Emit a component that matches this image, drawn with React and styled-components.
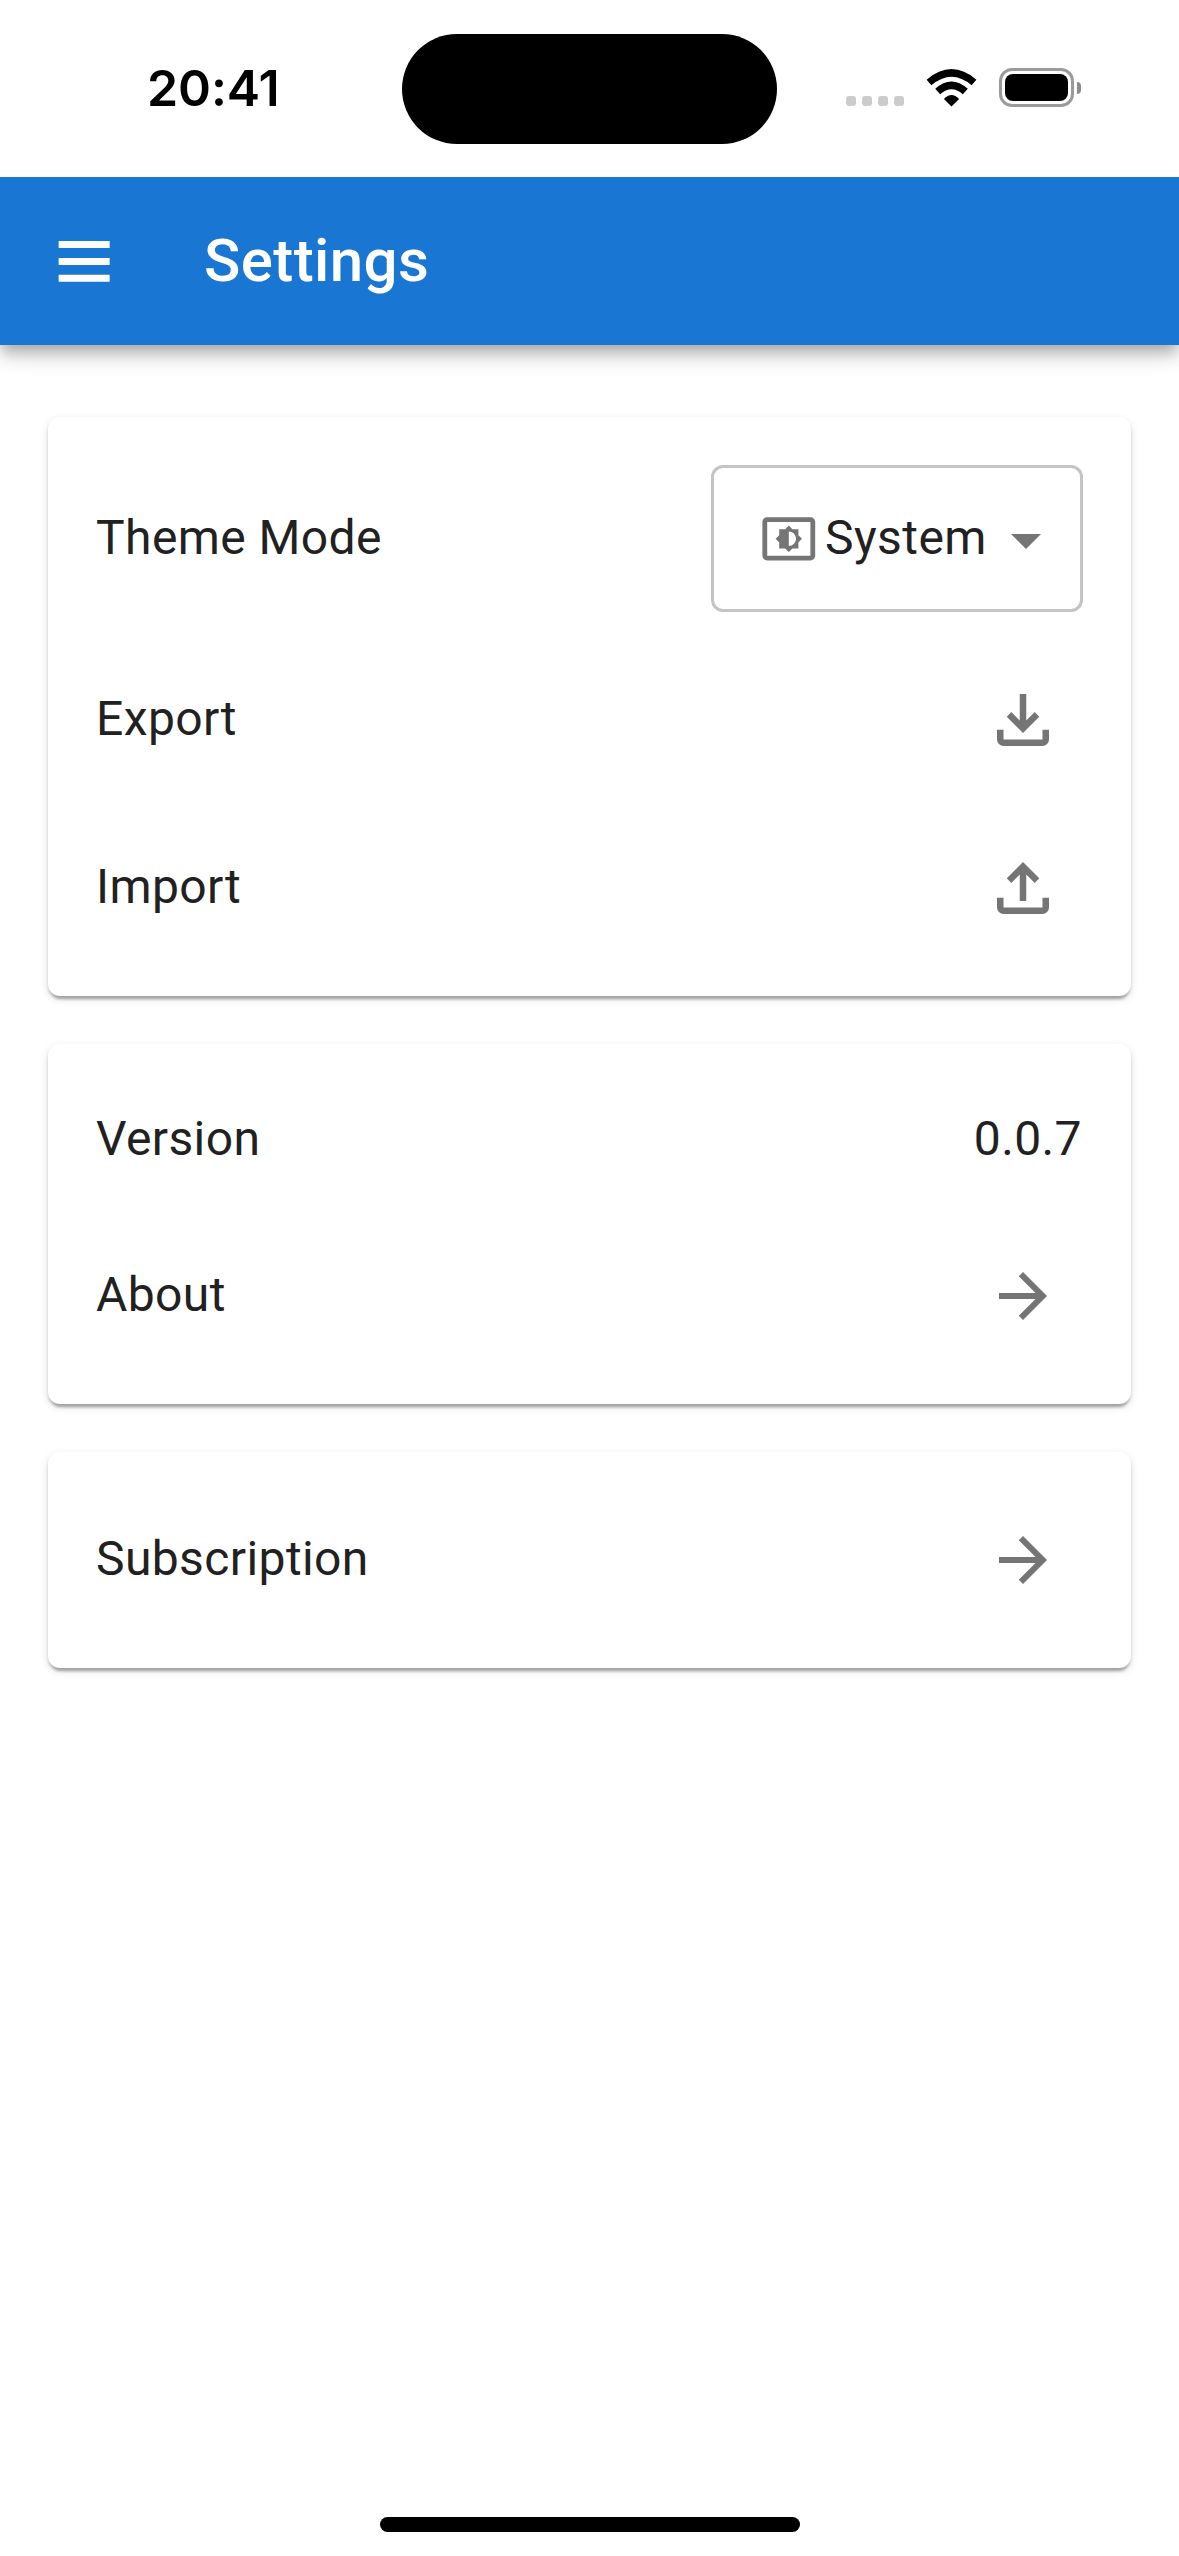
import React from "react";
import styled, { createGlobalStyle } from "styled-components";

const Global = createGlobalStyle`
  * { box-sizing: border-box; }
  body { margin: 0; background: #fff; }
`;

const Screen = styled.div`
  width: 1179px;
  height: 2556px;
  display: flex;
  flex-direction: column;
  background: #fff;
  color: #212121;
  font-family: Roboto, "Liberation Sans", sans-serif;
  font-size: 48px;
  line-height: 72px;
  letter-spacing: 0.4px;
`;

const StatusBar = styled.header`
  flex: none;
  position: relative;
  z-index: 1;
  height: 177px;
  display: grid;
  grid-template-columns: 402px 375px 402px;
  align-items: center;
  background: #fff;
`;

const Clock = styled.time`
  padding: 0 0 2px 147px;
  font: 600 50px/60px Inter, sans-serif;
  letter-spacing: -0.1px;
  color: #000;
`;

const Island = styled.div`
  height: 110px;
  margin-top: 1px;
  border-radius: 55px;
  background: #000;
`;

const StatusIcons = styled.div`
  display: flex;
  align-items: center;
  padding: 0 0 2px 69px;
`;

const SignalDots = styled.div`
  display: flex;
  gap: 6px;
  padding-top: 27px;
  margin-right: 22px;
`;

const SignalDot = styled.i`
  width: 10px;
  height: 10px;
  border-radius: 3px;
  background: #ccc;
`;

const Battery = styled.div`
  width: 75px;
  height: 39px;
  margin-left: 22px;
  padding: 3px;
  border: 3px solid #9b9b9b;
  border-radius: 13px;
`;

const BatteryLevel = styled.div`
  height: 100%;
  border-radius: 8px;
  background: #000;
`;

const BatteryCap = styled.div`
  width: 4px;
  height: 12px;
  margin-left: 3px;
  border-radius: 0 6px 6px 0;
  background: #8c8c8c;
`;

const AppBar = styled.nav`
  flex: none;
  height: 168px;
  display: flex;
  align-items: center;
  padding-left: 48px;
  background: #1976d2;
  color: #fff;
  box-shadow: 0 6px 12px -3px rgba(0, 0, 0, 0.2), 0 12px 15px 0 rgba(0, 0, 0, 0.14),
    0 3px 30px 0 rgba(0, 0, 0, 0.12);
`;

const MenuButton = styled.button`
  display: flex;
  padding: 0;
  border: 0;
  background: none;
  color: inherit;
  width: 156px;
`;

const Title = styled.h1`
  margin: 0;
  font-size: 60px;
  font-weight: 500;
  line-height: 96px;
  letter-spacing: 0.4px;
`;

const Content = styled.main`
  flex: 1;
  display: flex;
  flex-direction: column;
  gap: 48px;
  padding: 72px 48px 0;
`;

const Card = styled.section`
  display: flex;
  flex-direction: column;
  gap: 48px;
  padding: 48px;
  border-radius: 12px;
  background: #fff;
  box-shadow: 0 6px 3px -3px rgba(0, 0, 0, 0.2), 0 3px 3px 0 rgba(0, 0, 0, 0.14),
    0 3px 9px 0 rgba(0, 0, 0, 0.12);
`;

const Row = styled.div`
  height: ${(p) => p.$height}px;
  display: flex;
  align-items: center;
  justify-content: space-between;
`;

const Label = styled.span`
  padding-bottom: ${(p) => p.$lift ?? 3}px;
`;

const Value = styled(Label)`
  padding-right: 1px;
`;

const Select = styled.button`
  width: 372px;
  height: 147px;
  display: flex;
  align-items: center;
  padding: 0 18px 0 46px;
  border: 3px solid #c4c4c4;
  border-radius: 12px;
  background: none;
  color: inherit;
  font: inherit;
  letter-spacing: inherit;
`;

const SelectValue = styled(Label)`
  flex: 1;
  padding-left: 7.5px;
  text-align: left;
`;

const Caret = styled.span`
  display: flex;
  padding-top: 3px;
`;

const IconButton = styled.button`
  display: flex;
  padding: 0 ${(p) => p.$inset}px 0 0;
  border: 0;
  background: none;
  color: #757575;
`;

const HomeArea = styled.footer`
  display: flex;
  justify-content: center;
  padding-bottom: 24px;
`;

const HomeBar = styled.div`
  width: 420px;
  height: 15px;
  border-radius: 8px;
  background: #000;
`;

const Icon = ({ size = 72, color = "currentColor", d }) => (
  <svg width={size} height={size} viewBox="0 0 24 24" fill={color} aria-hidden="true">
    <path d={d} />
  </svg>
);

const MENU = "M3.55 5.35h17v2.300h-17zM3.55 11h17v2.300h-17zM3.55 16.620h17v2.300h-17z";
const TRAY = "M6 20q-.825 0-1.412-.587Q4 18.825 4 18v-3h2v3h12v-3h2v3q0 .825-.587 1.413Q18.825 20 18 20Z";
const DOWNLOAD = "m12 16-5-5 1.4-1.45 2.6 2.6V4h2v8.15l2.6-2.6L17 11Z" + TRAY;
const UPLOAD = "M11 16V7.85l-2.6 2.6L7 9l5-5 5 5-1.4 1.45-2.6-2.6V16Z" + TRAY;
const ARROW = "M12 4l-1.41 1.41L16.17 11H4v2h12.17l-5.58 5.59L12 20l8-8z";
const CARET = "M7 10l5 5 5-5z";
const DISPLAY =
  "M21 3H3c-1.11 0-2 .89-2 2v14c0 1.1.89 2 2 2h18c1.11 0 2-.9 2-2V5c0-1.11-.89-2-2-2zm0 16.02H3V4.98h18v14.04zM8 16h2.5l1.5 1.5 1.5-1.5H16v-2.5l1.5-1.5-1.5-1.5V8h-2.5L12 6.5 10.5 8H8v2.5L6.5 12 8 13.5V16zm4-7c1.66 0 3 1.34 3 3s-1.34 3-3 3V9z";

const Wifi = () => (
  <svg width="51" height="38" viewBox="0 0 51 38" aria-hidden="true">
    <path d="M25.500 37.600L17.900 30Q25.500 22.200 33.100 30Z" />
    <g fill="none" stroke="#000" strokeWidth="7.400">
      <path d="M11.700 22.600Q25.500 10.200 39.300 22.600" />
      <path d="M3 13.500Q25.500 -5.600 48 13.500" />
    </g>
  </svg>
);

export default function App() {
  return (
    <Screen>
      <Global />
      <StatusBar>
        <Clock>20:41</Clock>
        <Island />
        <StatusIcons>
          <SignalDots>
            <SignalDot /><SignalDot /><SignalDot /><SignalDot />
          </SignalDots>
          <Wifi />
          <Battery><BatteryLevel /></Battery>
          <BatteryCap />
        </StatusIcons>
      </StatusBar>
      <AppBar>
        <MenuButton aria-label="Menu"><Icon d={MENU} /></MenuButton>
        <Title>Settings</Title>
      </AppBar>
      <Content>
        <Card>
          <Row $height={147}>
            <Label $lift={1}>Theme Mode</Label>
            <Select>
              <Icon size={57.6} color="#757575" d={DISPLAY} />
              <SelectValue $lift={1}>System</SelectValue>
              <Caret><Icon color="#757575" d={CARET} /></Caret>
            </Select>
          </Row>
          <Row $height={120}>
            <Label>Export</Label>
            <IconButton $inset={21} aria-label="Export"><Icon size={78} d={DOWNLOAD} /></IconButton>
          </Row>
          <Row $height={120}>
            <Label>Import</Label>
            <IconButton $inset={21} aria-label="Import"><Icon size={78} d={UPLOAD} /></IconButton>
          </Row>
        </Card>
        <Card>
          <Row $height={96}>
            <Label>Version</Label>
            <Value>0.0.7</Value>
          </Row>
          <Row $height={120}>
            <Label>About</Label>
            <IconButton $inset={24} aria-label="About"><Icon d={ARROW} /></IconButton>
          </Row>
        </Card>
        <Card>
          <Row $height={120}>
            <Label>Subscription</Label>
            <IconButton $inset={24} aria-label="Subscription"><Icon d={ARROW} /></IconButton>
          </Row>
        </Card>
      </Content>
      <HomeArea><HomeBar /></HomeArea>
    </Screen>
  );
}
